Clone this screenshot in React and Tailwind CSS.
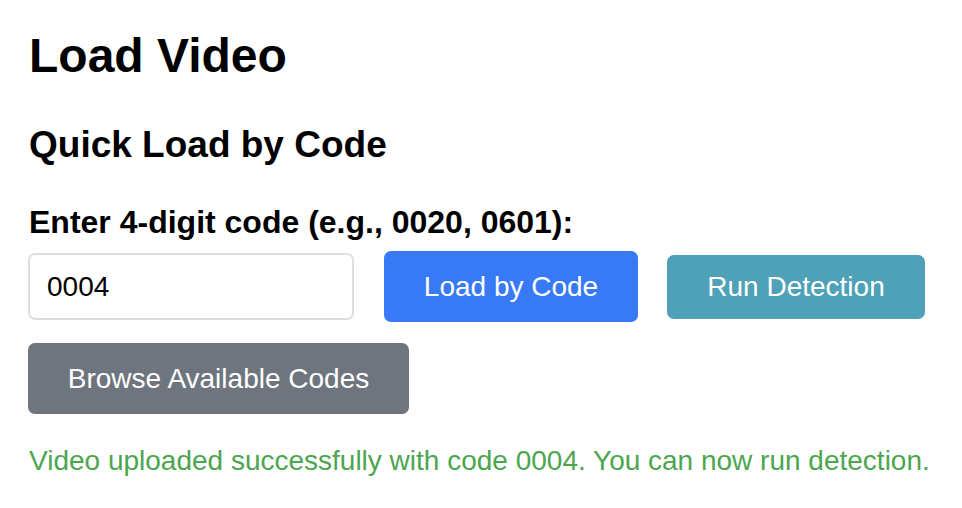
export default function App() {
  return (
    <div className="min-h-screen bg-white pl-[28px] pt-[32px] text-black" style={{ fontFamily: '"Liberation Sans", Arial, sans-serif' }}>
      <h1 className="pl-px text-[48px] font-bold leading-[48px]">Load Video</h1>
      <h2 className="mt-[46px] pl-px text-[37px] font-bold leading-[37px]">Quick Load by Code</h2>
      <label className="mt-[43px] block pl-px text-[32px] font-bold leading-[32px]">Enter 4-digit code (e.g., 0020, 0601):</label>
      <div className="mt-[13px] flex items-center">
        <input
          defaultValue="0004"
          className="h-[67px] w-[326px] rounded-[7px] border-2 border-[#dedede] bg-white px-[17px] text-[28px] text-black outline-none"
        />
        <button className="ml-[30px] h-[71px] w-[254px] rounded-[7px] bg-[#387af5] text-[28px] text-white">Load by Code</button>
        <button className="ml-[29px] h-[64px] w-[258px] rounded-[7px] bg-[#4ea1b6] text-[28px] text-white">Run Detection</button>
      </div>
      <button className="mt-[21px] h-[71px] w-[381px] rounded-[7px] bg-[#6e757e] text-[28px] text-white">Browse Available Codes</button>
      <p className="mt-[33px] pl-px text-[28px] leading-[28px] text-[#4ca64f]">Video uploaded successfully with code 0004. You can now run detection.</p>
    </div>
  );
}
